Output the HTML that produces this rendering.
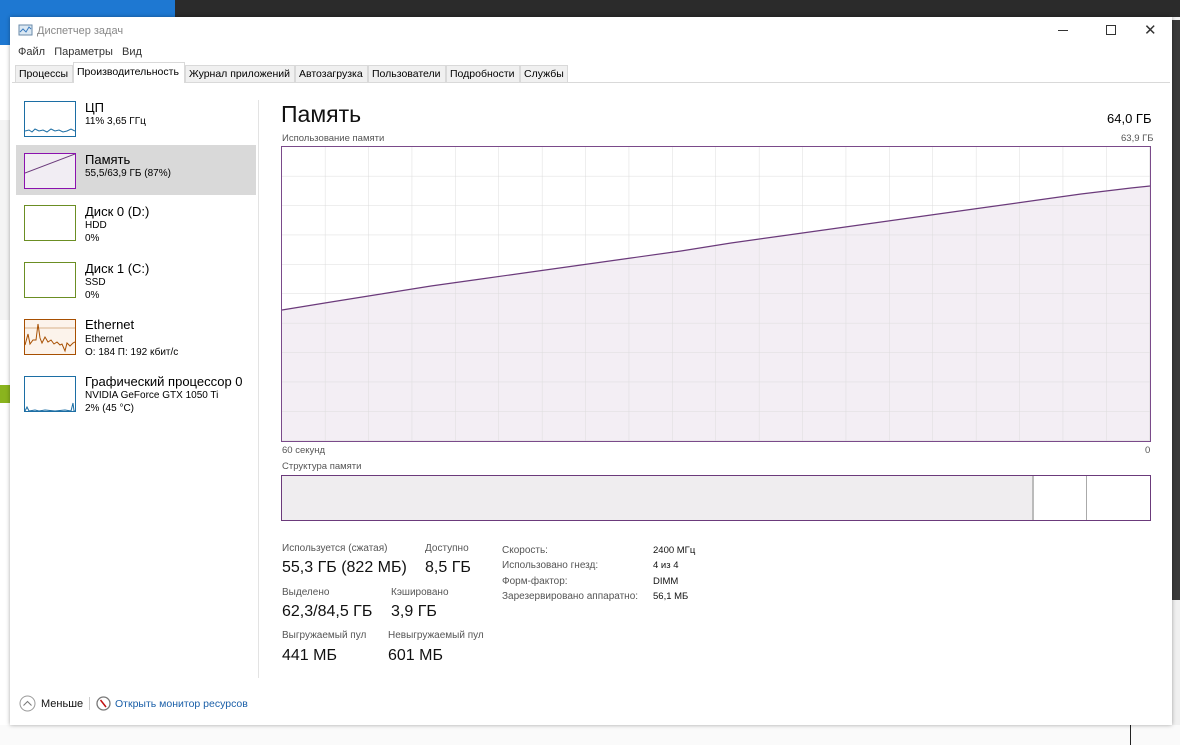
<!DOCTYPE html><html><head><meta charset="utf-8"><style>
*{margin:0;padding:0;box-sizing:border-box}
body{width:1180px;height:745px;overflow:hidden;background:#f0f0f0;font-family:"Liberation Sans","DejaVu Sans",sans-serif;position:relative;color:#000}
.a{position:absolute;white-space:nowrap}
.s{font-size:11px}
.t{font-size:9.5px;color:#555}
.thumb{position:absolute;left:24px;width:52px;height:36px;border:1px solid}
.nm{font-size:13px}
.sub{font-size:10px}
.lb{font-size:10px;color:#555}
.val{font-size:16px;color:#111}
.tab{position:absolute;top:65px;height:17px;font-size:10.5px;border:1px solid #d9d9d9;border-bottom:none;background:#f0f0f0;padding:2px 3px 0}
</style></head><body>
<div class="a" style="left:0;top:0;width:175px;height:45px;background:#1e78d2"></div>
<div class="a" style="left:175px;top:0;width:1005px;height:17px;background:#2b2b2b"></div>
<div class="a" style="left:0;top:45px;width:12px;height:700px;background:#fff"></div>
<div class="a" style="left:0;top:120px;width:12px;height:200px;background:#f4f4f4"></div>
<div class="a" style="left:0;top:385px;width:12px;height:18px;background:#8ab41e"></div>
<div class="a" style="left:1172px;top:20px;width:8px;height:580px;background:#3a3a3a"></div>
<div class="a" style="left:0;top:725px;width:1180px;height:20px;background:#fafafa"></div>
<div class="a" style="left:1130px;top:725px;width:1px;height:20px;background:#222"></div>
<div class="a" style="left:10px;top:17px;width:1162px;height:708px;background:#fff;box-shadow:0 0 4px rgba(0,0,0,.35)"></div>
<svg class="a" style="left:18px;top:24px" width="16" height="14"><rect x="1" y="1" width="13" height="10" fill="#dbe8f3" stroke="#6a8aa8"/><polyline points="2,8 5,5 8,8 11,3 13,5" fill="none" stroke="#3a7bbf"/></svg>
<div class="a s" style="left:37px;top:25px;color:#888">Диспетчер задач</div>
<div class="a" style="left:1058px;top:30px;width:10px;height:1px;background:#333"></div>
<div class="a" style="left:1106px;top:25px;width:10px;height:10px;border:1px solid #333"></div>
<div class="a" style="left:1144px;top:21px;font-size:15px;color:#333">✕</div>
<div class="a s" style="left:18px;top:46px;color:#333">Файл&nbsp;&nbsp; Параметры&nbsp;&nbsp; Вид</div>
<div class="a" style="left:12px;top:82px;width:1158px;height:1px;background:#d9d9d9"></div>
<div class="tab" style="left:15px;width:58px">Процессы</div>
<div class="tab" style="left:73px;top:62px;height:21px;width:112px;background:#fff;padding-top:3px">Производительность</div>
<div class="tab" style="left:185px;width:110px">Журнал приложений</div>
<div class="tab" style="left:295px;width:73px">Автозагрузка</div>
<div class="tab" style="left:368px;width:78px">Пользователи</div>
<div class="tab" style="left:446px;width:74px">Подробности</div>
<div class="tab" style="left:520px;width:48px">Службы</div>
<div class="a" style="left:16px;top:145px;width:240px;height:50px;background:#d9d9d9"></div>
<div class="a" style="left:258px;top:100px;width:1px;height:578px;background:#e3e3e3"></div>
<svg class="thumb" style="top:101px;border-color:#1c6ea4" width="52" height="36"><polyline points="0,29 4,28 7,30 10,27 14,29 18,28 22,30 26,27 30,29 34,28 38,30 42,29 46,27 50,29" fill="none" stroke="#1c6ea4"/></svg>
<svg class="thumb" style="top:153px;border-color:#8b12ae;background:#f1edf3" width="52" height="36"><polyline points="0,19 50,0" fill="none" stroke="#6b3a7b"/></svg>
<div class="thumb" style="top:205px;border-color:#6b8e23"></div>
<div class="thumb" style="top:262px;border-color:#6b8e23"></div>
<svg class="thumb" style="top:319px;border-color:#a74f01;background:#fcf3eb" width="52" height="37"><line x1="0" y1="8" x2="52" y2="8" stroke="#d8b08a"/><polyline points="0,25 3,14 5,24 8,20 11,20 13,4 15,18 17,23 20,17 23,22 26,20 29,24 32,22 35,25 37,24 40,31 42,23 45,26 48,23 50,22" fill="none" stroke="#a74f01"/></svg>
<svg class="thumb" style="top:376px;border-color:#1c6ea4" width="52" height="37"><polyline points="0,34 2,30 4,34 10,33 14,34 20,33 30,34 40,33 46,34 48,26 49,34 50,34" fill="none" stroke="#1c6ea4"/></svg>
<div class="a nm" style="left:85px;top:100px">ЦП</div><div class="a sub" style="left:85px;top:116px">11% 3,65 ГГц</div>
<div class="a nm" style="left:85px;top:152px">Память</div><div class="a sub" style="left:85px;top:168px">55,5/63,9 ГБ (87%)</div>
<div class="a nm" style="left:85px;top:204px">Диск 0 (D:)</div><div class="a sub" style="left:85px;top:220px">HDD</div><div class="a sub" style="left:85px;top:233px">0%</div>
<div class="a nm" style="left:85px;top:261px">Диск 1 (C:)</div><div class="a sub" style="left:85px;top:277px">SSD</div><div class="a sub" style="left:85px;top:290px">0%</div>
<div class="a nm" style="left:85px;top:317px">Ethernet</div><div class="a sub" style="left:85px;top:334px">Ethernet</div><div class="a sub" style="left:85px;top:347px">О: 184 П: 192 кбит/с</div>
<div class="a nm" style="left:85px;top:374px">Графический процессор 0</div><div class="a sub" style="left:85px;top:390px">NVIDIA GeForce GTX 1050 Ti</div><div class="a sub" style="left:85px;top:403px">2% (45 °C)</div>
<div class="a" style="left:281px;top:101px;font-size:23px;color:#111">Память</div>
<div class="a" style="left:1107px;top:111px;font-size:13px">64,0 ГБ</div>
<div class="a t" style="left:282px;top:133px">Использование памяти</div>
<div class="a t" style="left:1121px;top:133px">63,9 ГБ</div>
<svg class="a" style="left:281px;top:146px" width="870" height="296">
<defs><pattern id="g" x="1" y="1" width="43.4" height="29.4" patternUnits="userSpaceOnUse"><path d="M43.4 0V29.4M0 29.4H43.4" fill="none" stroke="#dcdcdc"/></pattern></defs>
<rect x="1" y="1" width="868" height="294" fill="#fff"/>
<polygon points="1,164 50,156 100,148 150,140 200,133 250,126 300,119 350,112 400,105 450,97 500,90 550,83 600,76 650,69 700,62 750,55 800,48 850,42 869,40 869,295 1,295" fill="#f3eef4"/>
<rect x="1" y="1" width="868" height="294" fill="url(#g)"/>
<polyline points="1,164 50,156 100,148 150,140 200,133 250,126 300,119 350,112 400,105 450,97 500,90 550,83 600,76 650,69 700,62 750,55 800,48 850,42 869,40" fill="none" stroke="#6b3a7b" stroke-width="1.2"/>
<rect x="0.5" y="0.5" width="869" height="295" fill="none" stroke="#7a4a8a"/>
</svg>
<div class="a t" style="left:282px;top:445px">60 секунд</div>
<div class="a t" style="left:1145px;top:445px">0</div>
<div class="a t" style="left:282px;top:461px">Структура памяти</div>
<div class="a" style="left:281px;top:475px;width:870px;height:46px;border:1px solid #6b3a7b;background:#fff"></div>
<div class="a" style="left:282px;top:476px;width:752px;height:44px;background:#efedef;border-right:2px solid #bbb"></div>
<div class="a" style="left:1086px;top:476px;width:1px;height:44px;background:#aaa"></div>
<div class="a lb" style="left:282px;top:543px">Используется (сжатая)</div>
<div class="a val" style="left:282px;top:559px">55,3 ГБ (822 МБ)</div>
<div class="a lb" style="left:425px;top:543px">Доступно</div>
<div class="a val" style="left:425px;top:559px">8,5 ГБ</div>
<div class="a lb" style="left:282px;top:587px">Выделено</div>
<div class="a val" style="left:282px;top:603px">62,3/84,5 ГБ</div>
<div class="a lb" style="left:391px;top:587px">Кэшировано</div>
<div class="a val" style="left:391px;top:603px">3,9 ГБ</div>
<div class="a lb" style="left:282px;top:630px">Выгружаемый пул</div>
<div class="a val" style="left:282px;top:647px">441 МБ</div>
<div class="a lb" style="left:388px;top:630px">Невыгружаемый пул</div>
<div class="a val" style="left:388px;top:647px">601 МБ</div>
<div class="a lb" style="left:502px;top:543px;line-height:15.3px">Скорость:<br>Использовано гнезд:<br>Форм-фактор:<br>Зарезервировано аппаратно:</div>
<div class="a" style="left:653px;top:543px;font-size:9.5px;line-height:15.3px;color:#111">2400 МГц<br>4 из 4<br>DIMM<br>56,1 МБ</div>
<svg class="a" style="left:19px;top:695px" width="17" height="17"><circle cx="8.5" cy="8.5" r="7.5" fill="none" stroke="#999"/><polyline points="4.5,10.5 8.5,6.5 12.5,10.5" fill="none" stroke="#777"/></svg>
<div class="a s" style="left:41px;top:698px;color:#111">Меньше</div>
<div class="a" style="left:89px;top:697px;width:1px;height:13px;background:#ccc"></div>
<svg class="a" style="left:96px;top:696px" width="15" height="15"><circle cx="7.5" cy="7.5" r="6.5" fill="#fff" stroke="#777" stroke-width="1.3"/><line x1="4.5" y1="4" x2="10" y2="11" stroke="#c01010" stroke-width="1.5"/></svg>
<div class="a" style="left:115px;top:698px;font-size:10.5px;color:#1a5fa8">Открыть монитор ресурсов</div>
</body></html>
